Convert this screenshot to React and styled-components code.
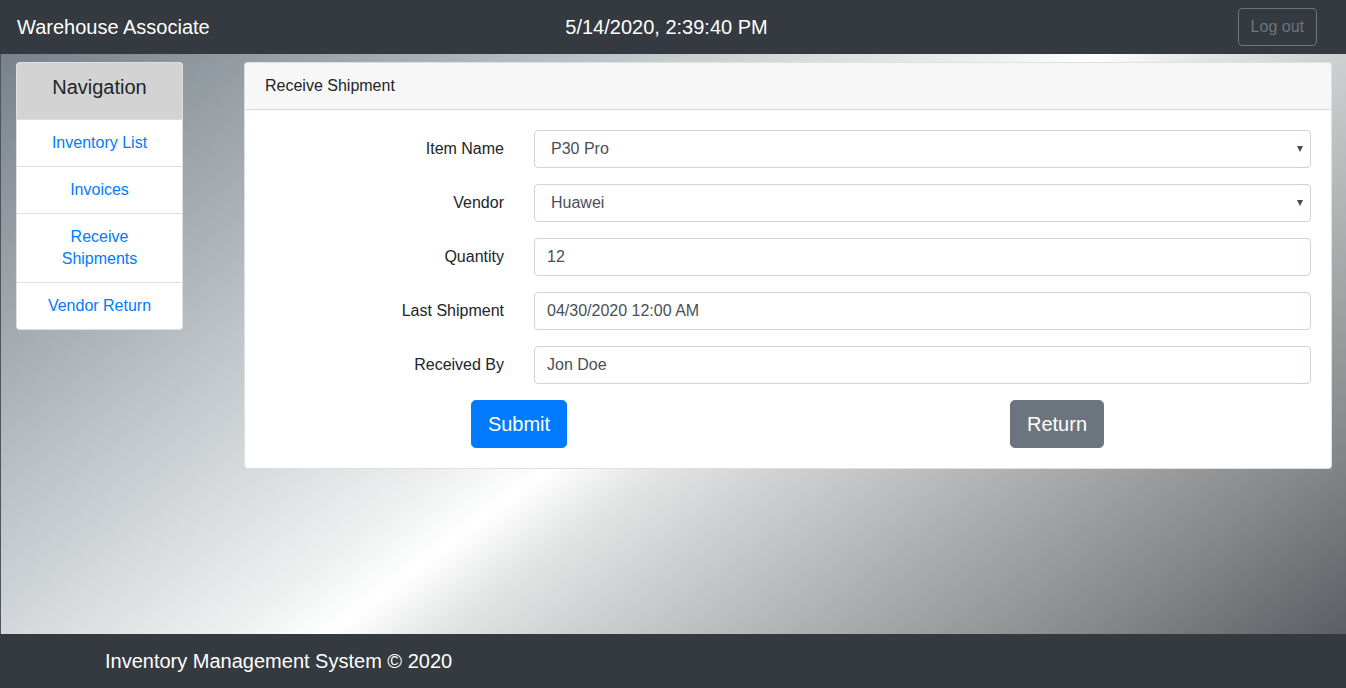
import styled, { createGlobalStyle } from 'styled-components'

const GlobalStyle = createGlobalStyle`
    * {
        box-sizing: border-box;
    }
    html, body {
        margin: 0;
        padding: 0;
        height: 100%;
    }
    body {
        font-family: "Liberation Sans", Arial, sans-serif;
        font-size: 16px;
        color: #212529;
    }
`

const navItems = ['Inventory List', 'Invoices', 'Receive Shipments', 'Vendor Return']

const fields = [
    { label: 'Item Name', value: 'P30 Pro', select: true },
    { label: 'Vendor', value: 'Huawei', select: true },
    { label: 'Quantity', value: '12' },
    { label: 'Last Shipment', value: '04/30/2020 12:00 AM' },
    { label: 'Received By', value: 'Jon Doe' },
]

const App = () => {
    return (
        <Page>
            <GlobalStyle />
            <TopBar>
                <Brand>Warehouse Associate</Brand>
                <Clock>5/14/2020, 2:39:40 PM</Clock>
                <LogoutWrap>
                    <LogoutButton>Log out</LogoutButton>
                </LogoutWrap>
            </TopBar>
            <Main>
                <NavCard>
                    <NavHeader>Navigation</NavHeader>
                    {navItems.map(item => (
                        <NavItem key={item} href="#">{item}</NavItem>
                    ))}
                </NavCard>
                <Card>
                    <CardHeader>Receive Shipment</CardHeader>
                    <CardBody>
                        {fields.map(f => (
                            <FormRow key={f.label}>
                                <Label>{f.label}</Label>
                                {f.select ? (
                                    <SelectWrap>
                                        <Select defaultValue={f.value}>
                                            <option>{f.value}</option>
                                        </Select>
                                    </SelectWrap>
                                ) : (
                                    <Input defaultValue={f.value} />
                                )}
                            </FormRow>
                        ))}
                        <ButtonRow>
                            <ButtonCell>
                                <Button $variant="primary">Submit</Button>
                            </ButtonCell>
                            <ButtonCell>
                                <Button $variant="secondary">Return</Button>
                            </ButtonCell>
                        </ButtonRow>
                    </CardBody>
                </Card>
            </Main>
            <Footer>Inventory Management System © 2020</Footer>
        </Page>
    )
}

const Page = styled.div`
    min-height: 100vh;
    display: flex;
    flex-direction: column;
`

const TopBar = styled.header`
    height: 54px;
    background-color: #343a40;
    display: grid;
    grid-template-columns: 1fr auto 1fr;
    align-items: center;
    padding: 0 29px 0 16px;
    color: #fff;
`

const Brand = styled.div`
    font-size: 20px;
    line-height: 30px;
    padding-left: 1px;
`

const Clock = styled.div`
    font-size: 20px;
    line-height: 30px;
`

const LogoutWrap = styled.div`
    display: flex;
    justify-content: flex-end;
`

const LogoutButton = styled.button`
    font-family: inherit;
    font-size: 16px;
    line-height: 24px;
    padding: 6px 12px;
    color: #6c757d;
    background: transparent;
    border: 1px solid #6c757d;
    border-radius: 4px;
`

const Main = styled.main`
    flex: 1;
    display: grid;
    grid-template-columns: 167px 1fr;
    align-items: start;
    gap: 61px;
    padding: 8px 14px 0 15px;
    border-left: 1px solid #4f555a;
    background: linear-gradient(143deg,
        #78828a 0%,
        #a3abb0 18%,
        #d2d6d9 36%,
        #eef0f0 47%,
        #ffffff 52%,
        #e3e4e4 57%,
        #d0d1d2 63%,
        #a9aaac 76%,
        #85888a 88%,
        #5b5f63 100%);
`

const NavCard = styled.nav`
    display: flex;
    flex-direction: column;
    background: #fff;
    border: 1px solid rgba(0, 0, 0, 0.125);
    border-radius: 4px;
    overflow: hidden;
`

const NavHeader = styled.div`
    background-color: #d3d3d3;
    text-align: center;
    font-size: 20px;
    line-height: 24px;
    padding: 12px 8px 20px;
`

const NavItem = styled.a`
    display: block;
    text-align: center;
    color: #007bff;
    text-decoration: none;
    line-height: 22px;
    padding: 12px 20px;
    border-top: 1px solid rgba(0, 0, 0, 0.125);
`

const Card = styled.section`
    background: #fff;
    border: 1px solid rgba(0, 0, 0, 0.125);
    border-radius: 4px;
    overflow: hidden;
`

const CardHeader = styled.div`
    background-color: #f7f7f7;
    border-bottom: 1px solid rgba(0, 0, 0, 0.125);
    padding: 11px 20px;
    line-height: 24px;
    font-size: 16px;
`

const CardBody = styled.div`
    padding: 20px;
    display: flex;
    flex-direction: column;
    gap: 16px;
`

const FormRow = styled.div`
    display: grid;
    grid-template-columns: 239px 1fr;
    gap: 30px;
    align-items: center;
`

const Label = styled.label`
    text-align: right;
    line-height: 24px;
`

const fieldStyles = `
    width: 100%;
    height: 38px;
    font-family: inherit;
    font-size: 16px;
    line-height: 24px;
    color: #495057;
    background: #fff;
    border: 1px solid #ced4da;
    border-radius: 4px;
    padding: 6px 12px;
    outline: none;
`

const Input = styled.input`
    ${fieldStyles}
`

const SelectWrap = styled.div`
    position: relative;
    &::after {
        content: '';
        position: absolute;
        right: 8px;
        top: 16px;
        border-left: 3.5px solid transparent;
        border-right: 3.5px solid transparent;
        border-top: 6px solid #4a4a4a;
        pointer-events: none;
    }
`

const Select = styled.select`
    ${fieldStyles}
    appearance: none;
    padding-left: 16px;
`

const ButtonRow = styled.div`
    display: grid;
    grid-template-columns: 1fr 1fr;
    margin: 0 -15px;
`

const ButtonCell = styled.div`
    display: flex;
    justify-content: center;
`

const Button = styled.button`
    font-family: inherit;
    font-size: 20px;
    line-height: 30px;
    padding: 8px 16px;
    color: #fff;
    border: 1px solid ${p => (p.$variant === 'primary' ? '#007bff' : '#6c757d')};
    background-color: ${p => (p.$variant === 'primary' ? '#007bff' : '#6c757d')};
    border-radius: 4.8px;
`

const Footer = styled.footer`
    height: 54px;
    background-color: #343a40;
    color: #fff;
    font-size: 20px;
    display: flex;
    align-items: center;
    padding-left: 105px;
`

export default App
